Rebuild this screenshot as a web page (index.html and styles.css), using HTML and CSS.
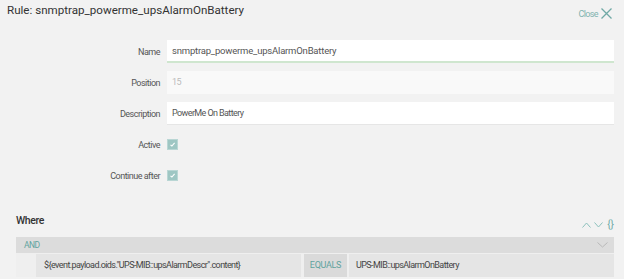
FILE: index.html
```html
<!DOCTYPE html>
<html lang="en">
<head>
    <meta charset="UTF-8">
    <title>Rule: snmptrap_powerme_upsAlarmOnBattery</title>
    <link rel="stylesheet" href="styles.css">
</head>
<body>
    <div class="header">
        <h1 class="title">Rule: snmptrap_powerme_upsAlarmOnBattery</h1>
        <a class="close" href="#">Close
            <svg width="13" height="13" viewBox="0 0 13 13"><path d="M1.5 1.5 L11.5 11.5 M11.5 1.5 L1.5 11.5" stroke="#6fa9a5" stroke-width="1.3" fill="none"/></svg>
        </a>
    </div>

    <div class="form">
        <div class="row">
            <label class="label">Name</label>
            <div class="input focused">snmptrap_powerme_upsAlarmOnBattery</div>
        </div>
        <div class="row">
            <label class="label">Position</label>
            <div class="input disabled">15</div>
        </div>
        <div class="row">
            <label class="label">Description</label>
            <div class="input bordered">PowerMe On Battery</div>
        </div>
        <div class="row">
            <label class="label">Active</label>
            <span class="checkbox">
                <svg width="11" height="11" viewBox="0 0 11 11"><path d="M3.5 5.8 L4.9 7 L7.6 3.9" stroke="#fff" stroke-width="1.1" fill="none"/></svg>
            </span>
        </div>
        <div class="row">
            <label class="label">Continue after</label>
            <span class="checkbox">
                <svg width="11" height="11" viewBox="0 0 11 11"><path d="M3.5 5.8 L4.9 7 L7.6 3.9" stroke="#fff" stroke-width="1.1" fill="none"/></svg>
            </span>
        </div>
    </div>

    <div class="where">
        <div class="where-header">
            <h2 class="where-title">Where</h2>
            <div class="tools">
                <svg width="9" height="6" viewBox="0 0 9 6"><path d="M0.5 5.5 L4.5 1 L8.5 5.5" stroke="#8cc0bc" stroke-width="1" fill="none"/></svg>
                <svg width="9" height="6" viewBox="0 0 9 6"><path d="M0.5 0.5 L4.5 5 L8.5 0.5" stroke="#8cc0bc" stroke-width="1" fill="none"/></svg>
                <span class="braces">{}</span>
            </div>
        </div>
        <div class="group">
            <div class="group-bar">
                <span class="op">AND</span>
                <svg width="11" height="6" viewBox="0 0 11 6"><path d="M0.5 0.5 L5.5 5 L10.5 0.5" stroke="#b8b8b8" stroke-width="1" fill="none"/></svg>
            </div>
            <div class="condition">
                <div class="cell field">${event.payload.oids."UPS-MIB::upsAlarmDescr".content}</div>
                <div class="cell operator">EQUALS</div>
                <div class="cell value">UPS-MIB::upsAlarmOnBattery</div>
            </div>
        </div>
    </div>
</body>
</html>
```

FILE: styles.css
```css
* {
    margin: 0;
    padding: 0;
    box-sizing: border-box;
}

body {
    background: #f2f2f2;
    color: #444;
    font-family: 'Roboto', 'Liberation Sans', sans-serif;
    font-size: 9px;
}

.header {
    height: 40px;
    display: flex;
    justify-content: space-between;
    align-items: flex-start;
    padding: 0 11px 0 7px;
}

.title {
    font-size: 11.6px;
    font-weight: 400;
    color: #333;
    line-height: 20px;
}

.close {
    display: flex;
    align-items: center;
    gap: 2px;
    margin-top: 7px;
    color: #7fb3af;
    font-size: 9px;
    letter-spacing: -0.6px;
    text-decoration: none;
}

.form {
    padding-right: 10px;
}

.row {
    display: flex;
    align-items: center;
    height: 23px;
    margin-bottom: 8px;
}

.label {
    width: 160px;
    text-align: right;
    color: #555;
    margin-right: 7px;
    font-size: 9px;
    letter-spacing: -0.5px;
}

.input {
    flex: 1;
    height: 23px;
    line-height: 22px;
    padding: 0 5px;
    background: #fff;
    color: #555;
    font-size: 9px;
    letter-spacing: -0.6px;
}

.input.focused {
    border-bottom: 2px solid #cfe6cf;
    line-height: 21px;
    font-size: 9.5px;
    letter-spacing: -0.2px;
}

.input.disabled {
    background: #f9f9f9;
    color: #bbb;
}

.input.bordered {
    border-bottom: 1px solid #e6e6e6;
}

.checkbox {
    width: 11px;
    height: 11px;
    background: #9ec6c3;
    border: 1px solid #b9d6d4;
    display: flex;
}

.checkbox svg {
    margin: -1px;
}

.where {
    padding: 0 10px 0 16px;
    margin-top: 24px;
}

.where-header {
    display: flex;
    justify-content: space-between;
    align-items: flex-end;
    height: 20px;
}

.where-title {
    font-size: 10.5px;
    font-weight: 500;
    letter-spacing: -0.4px;
    color: #333;
    line-height: 20px;
}

.tools {
    display: flex;
    align-items: center;
    gap: 3px;
    margin-bottom: 1px;
}

.braces {
    color: #6fa9a5;
    font-size: 10px;
    margin-left: 1px;
}

.group {
    margin-top: 6px;
    background: #e9e9e9;
}

.group-bar {
    height: 16px;
    background: #dcdcdc;
    display: flex;
    justify-content: space-between;
    align-items: center;
    padding: 0 6px 0 8px;
}

.op {
    color: #5fa39e;
    font-size: 8.5px;
    letter-spacing: -0.5px;
}

.condition {
    display: flex;
    gap: 2px;
    padding: 1px 0 0 20px;
    background: #efefef;
}

.cell {
    height: 23px;
    line-height: 23px;
    background: #e5e5e5;
    color: #444;
    font-size: 9px;
    letter-spacing: -0.58px;
}

.field {
    width: 265px;
    padding-left: 8px;
    margin-right: 1px;
}

.operator {
    width: 43px;
    background: #dadada;
    color: #5fa39e;
    text-align: center;
    letter-spacing: -0.3px;
}

.value {
    flex: 1;
    padding-left: 7px;
}
```
